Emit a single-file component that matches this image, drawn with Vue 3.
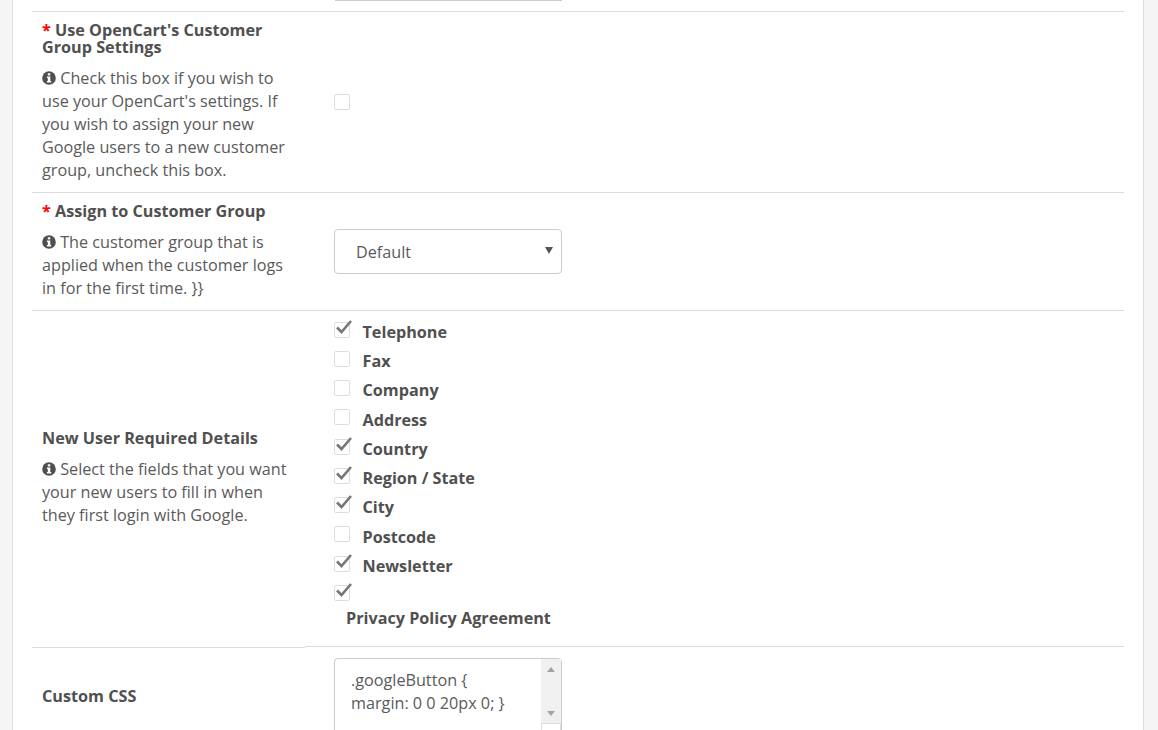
<script setup>
const fields = [
  ['Telephone', true], ['Fax', false], ['Company', false], ['Address', false], ['Country', true],
  ['Region / State', true], ['City', true], ['Postcode', false], ['Newsletter', true]
]
</script>

<template>
  <div class="page">
    <div class="panel">
      <div class="clip">
        <div class="prev"></div>
        <section class="row r1">
          <div class="lab"><div class="title"><span class="req">*</span> Use OpenCart's Customer Group Settings</div>
            <p class="help"><svg class="info" viewBox="0 0 14 14"><circle cx="7" cy="7" r="6.8" fill="#4f4f4f"/><rect x="5.8" y="2.3" width="2.5" height="2.1" fill="#fff"/><path d="M4.9 5.6H8.3V10H9.2V11.4H4.9V10H5.8V7H4.9Z" fill="#fff"/></svg> Check this box if you wish to use your OpenCart's settings. If you wish to assign your new Google users to a new customer group, uncheck this box.</p></div>
          <div class="ctl center"><span class="cb"></span></div>
        </section>
        <section class="row r2">
          <div class="lab"><div class="title"><span class="req">*</span> Assign to Customer Group</div>
            <p class="help"><svg class="info" viewBox="0 0 14 14"><circle cx="7" cy="7" r="6.8" fill="#4f4f4f"/><rect x="5.8" y="2.3" width="2.5" height="2.1" fill="#fff"/><path d="M4.9 5.6H8.3V10H9.2V11.4H4.9V10H5.8V7H4.9Z" fill="#fff"/></svg> The customer group that is applied when the customer logs in for the first time. }}</p></div>
          <div class="ctl center"><div class="select">Default<span class="caret"></span></div></div>
        </section>
        <section class="row r3">
          <div class="lab middle"><div class="title">New User Required Details</div>
            <p class="help"><svg class="info" viewBox="0 0 14 14"><circle cx="7" cy="7" r="6.8" fill="#4f4f4f"/><rect x="5.8" y="2.3" width="2.5" height="2.1" fill="#fff"/><path d="M4.9 5.6H8.3V10H9.2V11.4H4.9V10H5.8V7H4.9Z" fill="#fff"/></svg> Select the fields that you want your new users to fill in when they first login with Google.</p></div>
          <div class="ctl list">
            <label v-for="f in fields" :key="f[0]" class="item"><span class="cb"><svg v-if="f[1]" class="tick" viewBox="0 0 18 16"><path d="M2 8.5L6.5 13L16 2" fill="none" stroke="#777" stroke-width="2.6"/></svg></span><b>{{ f[0] }}</b></label>
            <div class="last"><span class="cb"><svg class="tick" viewBox="0 0 18 16"><path d="M2 8.5L6.5 13L16 2" fill="none" stroke="#777" stroke-width="2.6"/></svg></span><b>Privacy Policy Agreement</b></div>
          </div>
        </section>
        <section class="r4">
          <div class="lab css"><div class="title">Custom CSS</div></div>
          <div class="ctl cssctl"><div class="ta">.googleButton {<br>margin: 0 0 20px 0; }<div class="sb"><span class="up"></span><span class="down"></span></div><i class="grip"></i></div></div>
        </section>
      </div>
    </div>
  </div>
</template>

<style>
html, body { margin: 0; background: #f5f5f5; overflow: hidden; }
</style>
<style scoped>
.page { height: 730px; overflow: hidden; padding-left: 12px; box-sizing: border-box; font: 16.2px/23px "Open Sans", sans-serif; color: #5a5a5a; }
.panel { width: 1132px; height: 730px; background: #fff; border: solid #ddd; border-width: 0 1px; box-sizing: border-box; padding: 0 19px 0 19px; }
.clip { height: 730px; overflow: hidden; }
.prev { height: 1px; width: 227px; margin: 0 0 10px 303px; background: #ccc; }
.row { display: flex; border-top: 1px solid #ddd; }
.r1 { height: 180px; }
.r2 { height: 117px; }
.r3 { height: 335px; }
.r4 { display: flex; }
.lab { width: 302px; box-sizing: border-box; padding: 10px 10px 0 10px; flex: none; }
.title { font-weight: 700; line-height: 17px; color: #505050; padding-right: 20px; }
.req { color: #f00; }
.help { margin: 11px 0 0; width: 250px; }
.info { width: 14px; height: 14px; vertical-align: -1px; }
.middle { align-self: center; padding-top: 0; }
.ctl { flex: 1; }
.center { display: flex; align-items: center; }
.cb { display: inline-block; width: 14px; height: 14px; border: 1px solid #ddd; border-radius: 2px; position: relative; background: #fff; flex: none; }
.tick { position: absolute; left: 0; top: -4px; width: 18px; height: 16px; }
.select { margin-top: -1px; width: 228px; height: 45px; border: 1px solid #ccc; border-radius: 4px; box-sizing: border-box; padding: 11px 21px; position: relative; background: #fff; }
.caret { position: absolute; right: 8px; top: 17px; width: 0; height: 0; border: solid transparent; border-width: 7px 4px 0; border-top-color: #555; }
.list { padding-top: 6px; }
.item { display: flex; align-items: center; gap: 12.5px; height: 29.25px; }
.item .cb { margin-top: -4px; }
.item b { position: relative; top: 0.7px; }
.last .cb { display: block; margin-top: 5px; }
.last b { display: block; margin: 6px 0 0 12px; line-height: 23px; }
b { color: #505050; }
.css { width: 273px; border-top: 1px solid #ddd; margin-top: 1px; padding-top: 40px; }
.cssctl { border-top: 1px solid #ddd; padding-left: 29px; }
.ta { margin-top: 11px; width: 228px; height: 110px; border: 1px solid #ccc; border-radius: 4px; box-sizing: border-box; padding: 10px 16px; position: relative; }
.sb { position: absolute; right: 0; top: 0; height: 64px; width: 20px; background: #f0f0f0; display: flex; flex-direction: column; justify-content: space-between; align-items: center; padding: 8px 0 7px; box-sizing: border-box; }
.up, .down { width: 0; height: 0; border: solid transparent; }
.up { border-width: 0 4.5px 5px; border-bottom-color: #a3a3a3; }
.down { border-width: 5px 4.5px 0; border-top-color: #a3a3a3; }
.grip { position: absolute; right: 0; top: 64px; width: 20px; height: 20px; background: #fff; border: 1px solid #ddd; box-sizing: border-box; }
</style>
